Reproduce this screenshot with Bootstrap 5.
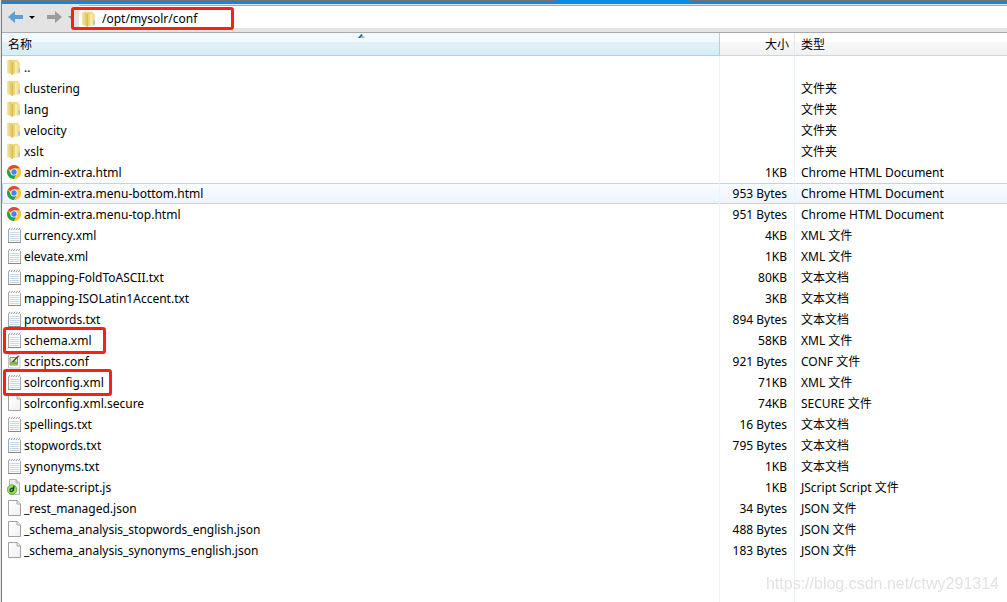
<!DOCTYPE html>
<html lang="zh-CN">
<head>
<meta charset="utf-8">
<meta name="viewport" content="width=device-width, initial-scale=1">
<title>/opt/mysolr/conf</title>
<link href="https://cdn.jsdelivr.net/npm/bootstrap@5.3.0/dist/css/bootstrap.min.css" rel="stylesheet">
<style>
  body { font-family: "Noto Sans", "Noto Sans CJK SC", sans-serif; font-size: 12px; line-height: 20px; color: #000; background: #fff; }
  .pane { border-left: 1px solid #e3e3e3; }
  .inner { border-left: 1px solid #7d7d7d; }
  .tabstrip { height: 4px; background: #0a8ae6; }
  .tabstrip span { height: 1px; background: #737373; }
  .tabstrip .gap-tab { background: #0a8ae6; }
  .toolbar { height: 29px; background: #e3e3e3; border-bottom: 1px solid #aaa; padding: 1px 0 0 4px; }
  .toolbar button { border: 0; background: none; padding: 0; line-height: 0; height: 23px; }
  .address { border-top: 1px solid #aaa; background: #fff; height: 23px; margin-left: 2px; padding: 3px 0 0 3px; }
  .address input { border: 0; outline: 0; background: transparent; font-size: 12px; color: #000; height: 20px; padding: 0; }
  .hit { position: relative; }
  .hit::after { content: ""; position: absolute; border: 3px solid #fb2014; border-radius: 3px; inset: -4px -14px -3px -4px; pointer-events: none; }
  .hit.tight::after { right: -8px; }
  .hit.path::after { inset: 1px auto -2px -8px; width: 163px; }
  .files { table-layout: fixed; width: 100%; height: calc(100vh - 33px); border-collapse: separate; border-spacing: 0; }
  .files th { height: 23px; padding: 2px 0 0; font-weight: 400; border-bottom: 1px solid #d5d5d5; background: linear-gradient(#fff 0 9px, #f7f8fa 9px, #f0f1f3); }
  .files th.sorted { position: relative; border-bottom-color: #96d9f9; border-right: 1px solid #96d9f9; background: linear-gradient(#f2f9fc 0 9px, #e1f1f9 9px, #d8ecf6); padding-left: 6px; }
  .sorted svg { position: absolute; top: 1px; left: 50%; margin-left: -3px; }
  .files th:nth-child(2) { text-align: right; padding-right: 5px; border-right: 1px solid #e2e5ea; }
  .files td { height: 21px; padding: 0; white-space: nowrap; border-right: 1px solid #ebf4fe; }
  .files td:last-child { border-right: 0; }
  .files tr.lead-gap td { height: 1px; }
  .files tr.rest td { height: auto; }
  .files td:first-child { padding-left: 5px; }
  .files td:nth-child(2) { text-align: right; padding-right: 7px; }
  .files td:nth-child(3) { padding-left: 6px; }
  .files th:nth-child(3) { padding-left: 6px; }
  .c-size { width: 75px; }
  .c-type { width: 212px; }
  .files tr.hover td { border-top: 1px solid #b8d6fb; border-bottom: 1px solid #b8d6fb; background: linear-gradient(#fafcff, #ebf4fe); line-height: 18px; }
  .files tr.hover td:first-child { border-left: 1px solid #b8d6fb; border-radius: 2px 0 0 2px; padding-left: 4px; }
  .files td svg { width: 16px; height: 16px; margin: 0 1px 1px 0; flex: none; }
  .name { display: inline-flex; align-items: center; vertical-align: top; }
  .credit { position: fixed; right: 8px; bottom: 8px; font: 16px/20px "Liberation Sans", sans-serif; color: #e2e2e2; }
</style>
</head>
<body>
<svg width="0" height="0" class="position-absolute" aria-hidden="true">
  <defs>
    <linearGradient id="gold"><stop stop-color="#f6eaa8"/><stop offset="1" stop-color="#e2c763"/></linearGradient>
    <linearGradient id="gold2"><stop stop-color="#faf1b8"/><stop offset="1" stop-color="#ecd685"/></linearGradient>
    <linearGradient id="paper" x2="1" y2="1"><stop stop-color="#fff"/><stop offset="1" stop-color="#f0f0f0"/></linearGradient>
  </defs>
  <symbol id="folder" viewBox="0 0 16 16">
    <path d="M1 .8h10.500v12.700H1z" fill="#f0de8e"/>
    <path d="M8 3h4.800v11.200L8 15z" fill="url(#gold2)"/>
    <path d="M0 1h4.500v14L0 14z" fill="url(#gold)"/>
    <path d="M4.500 3 8 1v13.500l-3.500 1.500z" fill="#eed574"/>
    <path d="M4.500 3h1.500v12.500l-1.500.5z" fill="#dcbc50"/>
    <path d="M11.500 9.500h1.500v4h-1.500z" fill="#8cc8ea"/>
  </symbol>
  <symbol id="chrome" viewBox="1 0 16 16">
    <circle cx="8" cy="8" r="7" fill="#fbc934"/>
    <path d="M8 8 1.940 4.500A7 7 0 0 1 14.060 4.500H8z" fill="#dc4a3e"/>
    <path d="M1.940 4.500A7 7 0 0 0 8 15L11 9.800 8 8 5 9.700z" fill="#22a05b"/>
    <path d="M8 4.500h6.060A7 7 0 0 1 8 15l3-5.200z" fill="#fbc934"/>
    <circle cx="8" cy="8" r="3.500" fill="#fff"/><circle cx="8" cy="8" r="2.700" fill="#4285f4"/>
  </symbol>
  <symbol id="note" viewBox="0 0 16 16">
    <path d="M1.500 2h12v13.500h-12z" fill="#fbfcfd" stroke="#a8a8a8"/>
    <path d="M1 15.500h13" stroke="#888"/>
    <path d="M2.500 5.500h10M2.500 7.500h10M2.500 9.500h10M2.500 11.500h10M2.500 13.500h10" stroke="#c8dae6"/>
    <path d="M1 1.500h13" stroke="#fff" stroke-width="2.500"/>
    <path d="M1.500 3 3 .8M4 3 5.500 .8M6.500 3 8 .8M9 3 10.500 .8M11.500 3 13 .8" stroke="#888" stroke-width=".8"/>
  </symbol>
  <symbol id="blank" viewBox="0 0 16 16">
    <path d="M1.500 .5h8.800L13.500 4v11.500h-12z" fill="url(#paper)" stroke="#a0a0a0"/>
    <path d="M10 .5V4h3.500" fill="#eee" stroke="#a0a0a0" stroke-width=".9"/>
  </symbol>
  <symbol id="conf" viewBox="0 0 16 16">
    <path d="M1.500 1.500h9l2.500 2v11.500H1.500z" fill="#fdfdfd" stroke="#c4c4c4"/>
    <path d="M3 4.500h7.500v7.500H3z" fill="#e6efc0" stroke="#8a9080"/><path d="M3.500 11.500V9l3-1.500 3.500 1.500v2.500z" fill="#7cb83e"/>
    <path d="m5.500 9 6-6" fill="none" stroke="#4b4b32" stroke-width="1.400"/>
  </symbol>
  <symbol id="script" viewBox="0 0 16 16">
    <path d="M2.500 .5h6.500L12.500 4v11.500h-10z" fill="#eee" stroke="#b5b5b5"/><path d="M9 .5V4h3.500" fill="#ccc" stroke="#b5b5b5"/>
    <circle cx="5" cy="10.500" r="4.800" fill="#9be04f" stroke="#5aa832" stroke-width=".8"/>
    <path d="M7 6.800 6.200 12M6.500 9.500c-2-1-4 .8-3.200 2.300.8 1.200 2.700.5 3-1" fill="none" stroke="#143f4c" stroke-width="1.400"/>
  </symbol>
</svg>

<main class="pane"><div class="inner min-vh-100">
  <div class="tabstrip d-flex"><span class="flex-grow-1"></span><span class="gap-tab" style="width:13.400%"></span><span style="width:31.500%"></span></div>
  <div class="toolbar d-flex">
    <button type="button" class="d-flex align-items-center" aria-label="后退">
      <svg width="32" height="16" viewBox="0 0 32 16"><path d="M2 8l7-6v4h8v4H9v4z" fill="#5b9fd6"/><path d="M23 7h6l-3 3z" fill="#000"/></svg>
    </button>
    <button type="button" class="d-flex align-items-center ms-2" aria-label="前进">
      <svg width="31" height="16" viewBox="0 0 31 16"><path d="M16 8 9 2v4H1v4h8v4z" fill="#9b9b9b"/><path d="M22 7h6l-3 3z" fill="#888"/></svg>
    </button>
    <div class="address hit path d-flex flex-grow-1 align-items-center">
      <svg width="16" height="16" aria-hidden="true"><use href="#folder"/></svg>
      <input class="flex-grow-1 ms-1" type="text" value="/opt/mysolr/conf" aria-label="路径">
    </div>
  </div>

  <table class="files">
    <colgroup><col><col class="c-size"><col class="c-type"></colgroup>
    <thead><tr><th class="sorted" scope="col" aria-sort="ascending">名称<svg width="7" height="4" viewBox="0 0 7 4" aria-hidden="true"><path d="M0 4 3.500 0 7 4z" fill="#8cc4dc"/><path d="M0 4 3.500 0 4.500 1 2 4z" fill="#2f5e78"/></svg></th><th scope="col">大小</th><th scope="col">类型</th></tr></thead>
    <tbody>
      <tr class="lead-gap" aria-hidden="true"><td></td><td></td><td></td></tr>
      <tr><td><span class="name"><svg><use href="#folder"/></svg>..</span></td><td></td><td></td></tr>
      <tr><td><span class="name"><svg><use href="#folder"/></svg>clustering</span></td><td></td><td>文件夹</td></tr>
      <tr><td><span class="name"><svg><use href="#folder"/></svg>lang</span></td><td></td><td>文件夹</td></tr>
      <tr><td><span class="name"><svg><use href="#folder"/></svg>velocity</span></td><td></td><td>文件夹</td></tr>
      <tr><td><span class="name"><svg><use href="#folder"/></svg>xslt</span></td><td></td><td>文件夹</td></tr>
      <tr><td><span class="name"><svg><use href="#chrome"/></svg>admin-extra.html</span></td><td>1KB</td><td>Chrome HTML Document</td></tr>
      <tr class="hover"><td><span class="name"><svg><use href="#chrome"/></svg>admin-extra.menu-bottom.html</span></td><td>953 Bytes</td><td>Chrome HTML Document</td></tr>
      <tr><td><span class="name"><svg><use href="#chrome"/></svg>admin-extra.menu-top.html</span></td><td>951 Bytes</td><td>Chrome HTML Document</td></tr>
      <tr><td><span class="name"><svg><use href="#note"/></svg>currency.xml</span></td><td>4KB</td><td>XML 文件</td></tr>
      <tr><td><span class="name"><svg><use href="#note"/></svg>elevate.xml</span></td><td>1KB</td><td>XML 文件</td></tr>
      <tr><td><span class="name"><svg><use href="#note"/></svg>mapping-FoldToASCII.txt</span></td><td>80KB</td><td>文本文档</td></tr>
      <tr><td><span class="name"><svg><use href="#note"/></svg>mapping-ISOLatin1Accent.txt</span></td><td>3KB</td><td>文本文档</td></tr>
      <tr><td><span class="name"><svg><use href="#note"/></svg>protwords.txt</span></td><td>894 Bytes</td><td>文本文档</td></tr>
      <tr><td><span class="name hit"><svg><use href="#note"/></svg>schema.xml</span></td><td>58KB</td><td>XML 文件</td></tr>
      <tr><td><span class="name"><svg><use href="#conf"/></svg>scripts.conf</span></td><td>921 Bytes</td><td>CONF 文件</td></tr>
      <tr><td><span class="name hit tight"><svg><use href="#note"/></svg>solrconfig.xml</span></td><td>71KB</td><td>XML 文件</td></tr>
      <tr><td><span class="name"><svg><use href="#blank"/></svg>solrconfig.xml.secure</span></td><td>74KB</td><td>SECURE 文件</td></tr>
      <tr><td><span class="name"><svg><use href="#note"/></svg>spellings.txt</span></td><td>16 Bytes</td><td>文本文档</td></tr>
      <tr><td><span class="name"><svg><use href="#note"/></svg>stopwords.txt</span></td><td>795 Bytes</td><td>文本文档</td></tr>
      <tr><td><span class="name"><svg><use href="#note"/></svg>synonyms.txt</span></td><td>1KB</td><td>文本文档</td></tr>
      <tr><td><span class="name"><svg><use href="#script"/></svg>update-script.js</span></td><td>1KB</td><td>JScript Script 文件</td></tr>
      <tr><td><span class="name"><svg><use href="#blank"/></svg>_rest_managed.json</span></td><td>34 Bytes</td><td>JSON 文件</td></tr>
      <tr><td><span class="name"><svg><use href="#blank"/></svg>_schema_analysis_stopwords_english.json</span></td><td>488 Bytes</td><td>JSON 文件</td></tr>
      <tr><td><span class="name"><svg><use href="#blank"/></svg>_schema_analysis_synonyms_english.json</span></td><td>183 Bytes</td><td>JSON 文件</td></tr>
      <tr class="rest" aria-hidden="true"><td></td><td></td><td></td></tr>
    </tbody>
  </table>
</div></main>
<div class="credit">https://blog.csdn.net/ctwy291314</div>
<script src="https://cdn.jsdelivr.net/npm/bootstrap@5.3.0/dist/js/bootstrap.bundle.min.js"></script>
</body>
</html>
